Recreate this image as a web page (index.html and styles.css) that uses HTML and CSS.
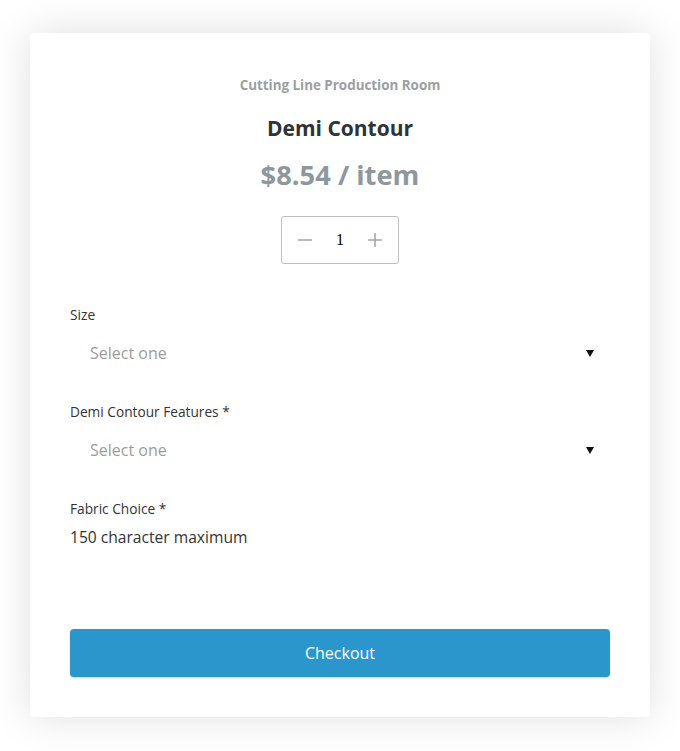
FILE: index.html
```html
<!DOCTYPE html>
<html lang="en">
<head>
<meta charset="utf-8">
<title>Demi Contour</title>
<link rel="stylesheet" href="styles.css">
</head>
<body>
<div class="card">
  <div class="shop">Cutting Line Production Room</div>
  <h1 class="title">Demi Contour</h1>
  <div class="price">$8.54 / item</div>
  <div class="qty-row">
    <div class="qty">
      <span class="qty-btn">
        <svg width="16" height="16" viewBox="0 0 16 16"><path d="M1 8h14" stroke="#a8a8a8" stroke-width="1.6" fill="none"/></svg>
      </span>
      <span class="qty-num">1</span>
      <span class="qty-btn">
        <svg width="16" height="16" viewBox="0 0 16 16"><path d="M1 8h14M8 1v14" stroke="#a8a8a8" stroke-width="1.6" fill="none"/></svg>
      </span>
    </div>
  </div>

  <div class="field first">
    <div class="label">Size</div>
    <div class="select">
      <span class="placeholder">Select one</span>
      <span class="caret"></span>
    </div>
  </div>

  <div class="field">
    <div class="label">Demi Contour Features *</div>
    <div class="select">
      <span class="placeholder">Select one</span>
      <span class="caret"></span>
    </div>
  </div>

  <div class="field">
    <div class="label">Fabric Choice *</div>
    <div class="text-input">150 character maximum</div>
  </div>

  <button class="checkout" type="button">Checkout</button>
</div>
</body>
</html>
```
FILE: styles.css
```css
* { box-sizing: border-box; }

html, body {
  margin: 0;
  padding: 0;
  background: #ffffff;
}

body {
  font-family: "Open Sans", "Liberation Sans", sans-serif;
  color: #333333;
  padding: 33px 30px 34px;
}

.card {
  width: 620px;
  height: 684px;
  background: #ffffff;
  border-radius: 3px;
  box-shadow: 0 0 40px rgba(0, 0, 0, 0.13);
  padding: 44px 40px 40px;
  display: flex;
  flex-direction: column;
}

.shop {
  text-align: center;
  font-size: 13.4px;
  line-height: 16px;
  font-weight: 700;
  color: #9a9fa4;
}

.title {
  margin: 23px 0 0;
  text-align: center;
  font-size: 21px;
  line-height: 24px;
  font-weight: 700;
  color: #2f3336;
}

.price {
  margin-top: 18px;
  text-align: center;
  font-size: 27.3px;
  line-height: 34px;
  font-weight: 700;
  color: #8e979d;
}

.qty-row {
  margin-top: 24px;
  display: flex;
  justify-content: center;
}

.qty {
  width: 118px;
  height: 48px;
  border: 1px solid #bdbdbd;
  border-radius: 3px;
  display: flex;
  align-items: center;
  justify-content: space-between;
  padding: 0 15px;
}

.qty-btn {
  display: flex;
  align-items: center;
}

.qty-num {
  font-family: "Liberation Serif", serif;
  font-size: 16px;
  color: #000;
}

.field {
  margin-top: 31px;
}

.field.first {
  margin-top: 43px;
}

.label {
  font-size: 13.7px;
  line-height: 16px;
  color: #333;
}

.select {
  margin-top: 10px;
  height: 40px;
  display: flex;
  align-items: center;
  justify-content: space-between;
  padding: 0 16px 0 20px;
}

.placeholder {
  font-size: 16px;
  color: #9c9c9c;
}

.caret {
  width: 0;
  height: 0;
  border-left: 4px solid transparent;
  border-right: 4px solid transparent;
  border-top: 7px solid #111;
}

.text-input {
  margin-top: 10px;
  font-size: 15.6px;
  line-height: 20px;
  color: #333;
}

.checkout {
  margin-top: auto;
  width: 100%;
  height: 48px;
  border: none;
  border-radius: 4px;
  background: #2a96cc;
  color: #ffffff;
  font-family: "Open Sans", "Liberation Sans", sans-serif;
  font-size: 16px;
  box-shadow: 0 1px 2px rgba(0, 0, 0, 0.2);
}
```
